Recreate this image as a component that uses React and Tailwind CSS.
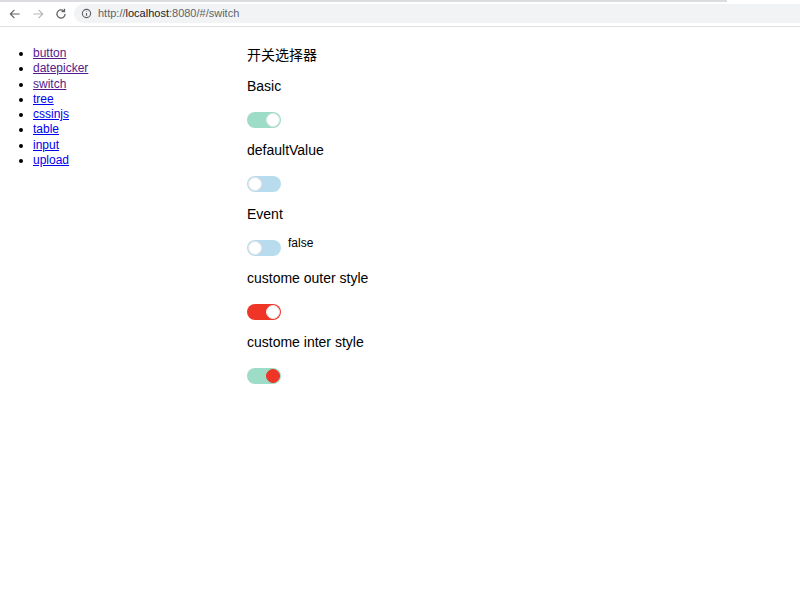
import React, { useState } from "react";

const font = { fontFamily: '"Liberation Sans", "Noto Sans CJK SC", sans-serif' };

function Switch({ on, track, knob = "bg-white", onChange }) {
  return (
    <button
      onClick={onChange}
      className={`relative block w-[34px] h-[16px] rounded-full ${track}`}
    >
      <span
        className={`absolute top-[1px] w-[14px] h-[14px] rounded-full border border-[#e6e6e6] ${knob} ${
          on ? "left-[19px]" : "left-[1px]"
        }`}
      />
    </button>
  );
}

function BrowserBar() {
  return (
    <div className="h-[27px] relative border-b border-[#dfe1e5] bg-white">
      <div className="absolute top-0 left-0 h-[2px] w-[727px] bg-[#dadce0]" />
      <div className="flex items-center h-full pt-[1px]">
        <div className="flex items-center gap-[9px] pl-[8px] pr-[6px]">
          <svg width="14" height="14" viewBox="0 0 24 24" fill="none" stroke="#5f6368" strokeWidth="2">
            <path d="M20 12H5M11 5l-7 7 7 7" />
          </svg>
          <svg width="14" height="14" viewBox="0 0 24 24" fill="none" stroke="#b4b7bb" strokeWidth="2">
            <path d="M4 12h15M13 5l7 7-7 7" />
          </svg>
          <svg width="14" height="14" viewBox="0 0 24 24" fill="none" stroke="#5f6368" strokeWidth="2.2">
            <path d="M19 12a7 7 0 1 1-2.1-5" />
            <path d="M18 3v5h-5" />
          </svg>
        </div>
        <div className="flex-1 h-[19px] bg-[#f1f3f4] rounded-l-full flex items-center pl-[7px] text-[11px] text-[#202124]">
          <svg width="11" height="11" viewBox="0 0 24 24" fill="none" stroke="#5f6368" strokeWidth="2.5">
            <circle cx="12" cy="12" r="9" />
            <path d="M12 11v6M12 7v1" />
          </svg>
          <span className="ml-[6px] text-[#5f6368]">
            http://<span className="text-[#202124]">localhost</span>:8080/#/switch
          </span>
        </div>
      </div>
    </div>
  );
}

export default function App() {
  const [basic, setBasic] = useState(true);
  const [def, setDef] = useState(false);
  const [ev, setEv] = useState(false);
  const [outer, setOuter] = useState(true);
  const [inner, setInner] = useState(true);

  const links = ["button", "datepicker", "switch", "tree", "cssinjs", "table", "input", "upload"];
  const visited = ["button", "datepicker", "switch"];

  return (
    <div className="w-[800px] h-[598px] bg-white text-black" style={font}>
      <BrowserBar />
      <div className="flex">
        <div className="w-[247px] shrink-0 pt-[19px]">
          <ul className="list-disc pl-[33px] text-[12px] leading-[15.3px]">
            {links.map((l) => (
              <li key={l}>
                <a
                  href={`#/${l}`}
                  className={`underline ${visited.includes(l) ? "text-[#551a8b]" : "text-[#0000ee]"}`}
                >
                  {l}
                </a>
              </li>
            ))}
          </ul>
        </div>
        <main className="pt-[18px] text-[14px]">
          <h2 className="leading-5 mb-[11px]">开关选择器</h2>

          <div className="h-[64px]">
            <p className="leading-5">Basic</p>
            <div className="mt-[16px]">
              <Switch on={basic} track={basic ? "bg-[#9ddcc7]" : "bg-[#b9dbee]"} onChange={() => setBasic(!basic)} />
            </div>
          </div>

          <div className="h-[64px]">
            <p className="leading-5">defaultValue</p>
            <div className="mt-[16px]">
              <Switch on={def} track={def ? "bg-[#9ddcc7]" : "bg-[#b9dbee]"} onChange={() => setDef(!def)} />
            </div>
          </div>

          <div className="h-[64px]">
            <p className="leading-5">Event</p>
            <div className="mt-[16px] flex items-start gap-[7px]">
              <Switch on={ev} track={ev ? "bg-[#9ddcc7]" : "bg-[#b9dbee]"} onChange={() => setEv(!ev)} />
              <span className="text-[12px] leading-[12px] -mt-[3px]">{ev ? "true" : "false"}</span>
            </div>
          </div>

          <div className="h-[64px]">
            <p className="leading-5">custome outer style</p>
            <div className="mt-[16px]">
              <Switch on={outer} track="bg-[#ee3526]" onChange={() => setOuter(!outer)} />
            </div>
          </div>

          <div className="h-[64px]">
            <p className="leading-5">custome inter style</p>
            <div className="mt-[16px]">
              <Switch
                on={inner}
                track="bg-[#9ddcc7]"
                knob="bg-[#ee3526] border-[#ee3526]"
                onChange={() => setInner(!inner)}
              />
            </div>
          </div>
        </main>
      </div>
    </div>
  );
}
